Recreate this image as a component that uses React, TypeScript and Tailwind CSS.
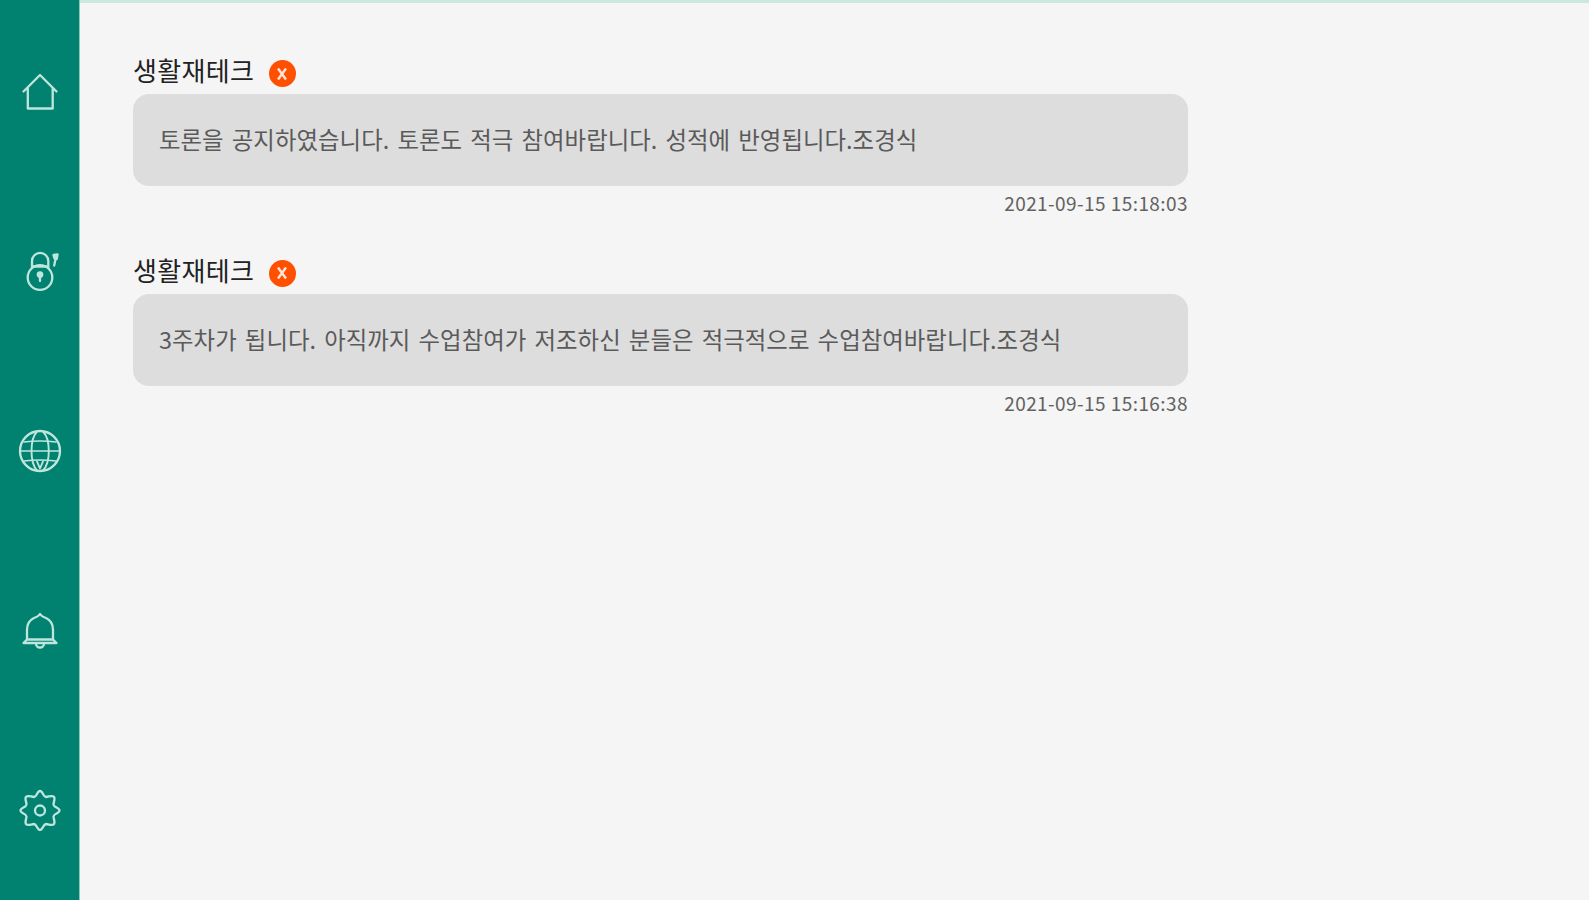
import type { ReactNode } from "react";

type Message = {
  course: string;
  body: string;
  date: string;
};

const messages: Message[] = [
  {
    course: "생활재테크",
    body: "토론을 공지하였습니다. 토론도 적극 참여바랍니다. 성적에 반영됩니다.조경식",
    date: "2021-09-15 15:18:03",
  },
  {
    course: "생활재테크",
    body: "3주차가 됩니다. 아직까지 수업참여가 저조하신 분들은 적극적으로 수업참여바랍니다.조경식",
    date: "2021-09-15 15:16:38",
  },
];

function Icon({ children }: { children: ReactNode }) {
  return (
    <svg
      viewBox="0 0 48 48"
      className="size-12 fill-none stroke-[#bfe6de] stroke-[2.3]"
      strokeLinejoin="round"
      strokeLinecap="round"
    >
      {children}
    </svg>
  );
}

function Sidebar() {
  return (
    <nav className="flex w-20 shrink-0 flex-col items-center justify-between border-r border-[#8fc6bb] bg-[#018270] pt-[68px] pb-[66px] pl-px">
      <button aria-label="홈">
        <Icon>
          <path d="M7.5 23.5 24 7l16.5 16.5M11.8 20v20.5h24.9V20" />
        </Icon>
      </button>
      <button aria-label="잠금">
        <Icon>
          <circle cx="24" cy="29.5" r="12.3" />
          <path d="M16 20v-7a8 8 0 0 1 16.3 0v7" />
          <path d="M17 18.5h14" />
          <circle cx="24" cy="26.5" r="2.2" className="fill-[#bfe6de]" />
          <path d="M24 27v6" />
          <path d="M37.5 7l4-.5-.8 4.5-2.200-.5z" className="fill-[#bfe6de]" />
          <path d="M39.5 11l-1.3 6.500" />
        </Icon>
      </button>
      <button aria-label="언어">
        <Icon>
          <circle cx="24" cy="24" r="20" />
          <path d="M4 24h40M8 15q16-2 32 0M8 34q16-2 32 0" strokeWidth="1.7" />
          <path d="M21 4.5q-5.500 6-5.500 19.500T21 43.500M27 4.500q5.800 6 5.800 19.500T27 43.500M21 34.500l3 7 3-7" strokeWidth="1.9" />
        </Icon>
      </button>
      <button aria-label="알림">
        <Icon>
          <path d="M11 32.500V22.500q0-8 7-11.500Q22.500 9.500 24 7q1.500 2.500 6 4Q37 14.500 37 22.500v10" />
          <path d="M11 32.500l-3.500 3.500h33L37 32.500z" />
          <path d="M20 36.500a4 4 0 1 0 8 0" />
        </Icon>
      </button>
      <button aria-label="설정">
        <Icon>
          <path d="M24 5C27 5 27 10.800 30 11C32.500 11 36 8.800 37.800 10.700C39.700 12.500 37.500 16 37.500 18.500C37.700 21.500 43.500 21.500 43.500 24.500C43.500 27.500 37.700 27.500 37.500 30.500C37.500 33 39.700 36.500 37.800 38.300C36 40.200 32.500 38 30 38C27 38.200 27 44 24 44C21 44 21 38.200 18 38C15.500 38 12 40.200 10.200 38.300C8.300 36.500 10.500 33 10.500 30.500C10.300 27.500 4.500 27.500 4.500 24.500C4.500 21.500 10.300 21.500 10.500 18.500C10.500 16 8.300 12.500 10.200 10.700C12 8.800 15.500 11 18 11C21 10.800 21 5 24 5z" />
          <circle cx="24" cy="24.5" r="5" />
        </Icon>
      </button>
    </nav>
  );
}

function MessageCard({ message }: { message: Message }) {
  return (
    <article className="h-[199.5px]">
      <header className="flex h-[42px] items-start gap-[14.5px]">
        <h2 className="w-[121px] whitespace-nowrap text-[26px] leading-[36px] tracking-[0.3px] text-[#222]">
          {message.course}
        </h2>
        <button
          aria-label="삭제"
          className="mt-2 flex size-[27px] items-center justify-center rounded-full bg-[#ff4f00]"
        >
          <svg viewBox="0 0 12 14" className="h-3.5 w-3 fill-none stroke-[#ffe3d4] stroke-[2.4]">
            <path d="M2 1.5l8 11M10 1.5l-8 11" />
          </svg>
        </button>
      </header>
      <p className="flex h-[92px] items-center whitespace-nowrap rounded-2xl bg-[#ddd] px-[26px] text-[23.4px] tracking-[0.04px] text-[#5a5a5a] [word-spacing:2.85px]">
        {message.body}
      </p>
      <time className="block text-right text-[19px] leading-[33px] tracking-[0.43px] text-[#626262]">
        {message.date}
      </time>
    </article>
  );
}

export default function App() {
  return (
    <div className="flex h-[900px] overflow-hidden bg-[#f5f5f5] font-['Noto_Sans_CJK_KR',sans-serif]">
      <Sidebar />
      <main className="flex-1 border-t-[3px] border-[#cce7df] pt-[49px] pl-[53px]">
        <div className="w-[1055px]">
          {messages.map((message) => (
            <MessageCard key={message.date} message={message} />
          ))}
        </div>
      </main>
    </div>
  );
}
